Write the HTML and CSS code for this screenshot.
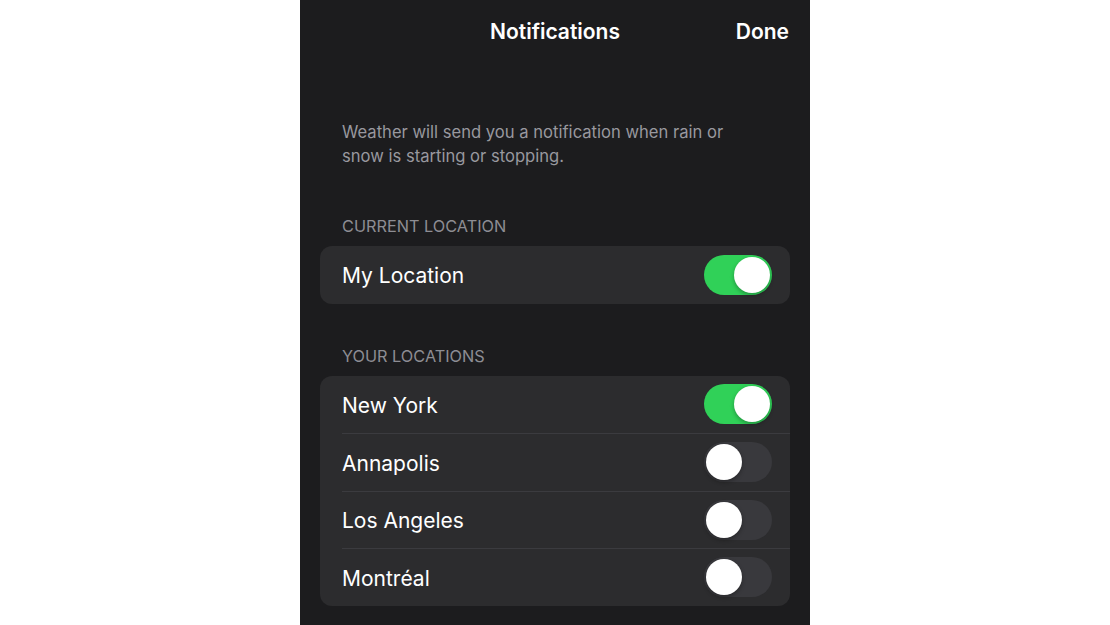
FILE: index.html
```html
<!DOCTYPE html>
<html lang="en">
<head>
  <meta charset="UTF-8" />
  <meta name="viewport" content="width=device-width, initial-scale=1.0"/>
  <title>Notifications</title>
  <link rel="stylesheet" href="styles.css">
</head>
<body>
  <div class="screen">
    <div class="nav">
      <span></span>
      <span class="nav-title">Notifications</span>
      <span class="nav-done">Done</span>
    </div>

    <p class="intro">Weather will send you a notification when rain or snow is starting or stopping.</p>

    <div class="group group-first">
      <div class="group-title">CURRENT LOCATION</div>
      <div class="card">
        <div class="row">
          <span class="label">My Location</span>
          <span class="switch on"><span class="knob"></span></span>
        </div>
      </div>
    </div>

    <div class="group">
      <div class="group-title">YOUR LOCATIONS</div>
      <div class="card">
        <div class="row">
          <span class="label">New York</span>
          <span class="switch on"><span class="knob"></span></span>
        </div>
        <div class="row">
          <span class="label">Annapolis</span>
          <span class="switch"><span class="knob"></span></span>
        </div>
        <div class="row">
          <span class="label">Los Angeles</span>
          <span class="switch"><span class="knob"></span></span>
        </div>
        <div class="row">
          <span class="label">Montréal</span>
          <span class="switch"><span class="knob"></span></span>
        </div>
      </div>
    </div>
  </div>
</body>
</html>
```

FILE: styles.css
```css
body {
  margin: 0;
  background: #ffffff;
  font-family: Inter, 'Noto Sans', sans-serif;
}
.screen {
  width: 510px;
  height: 625px;
  margin: 0 auto;
  background: #1c1c1e;
  color: #ffffff;
  overflow: hidden;
}
.nav {
  display: grid;
  grid-template-columns: 1fr auto 1fr;
  align-items: center;
  height: 62px;
  padding: 0 21px;
  font-size: 21px;
  font-weight: 600;
}
.nav-done {
  justify-self: end;
}
.intro {
  margin: 58px 0 0;
  padding: 0 50px 0 42px;
  font-size: 16.6px;
  line-height: 24px;
  color: #98989e;
}
.group {
  margin-top: 42px;
}
.group-first {
  margin-top: 48px;
}
.group-title {
  padding-left: 42px;
  font-size: 16.3px;
  line-height: 20px;
  color: #8d8d93;
  margin-bottom: 10px;
}
.card {
  margin: 0 20px;
  background: #2c2c2e;
  border-radius: 12px;
}
.row {
  display: flex;
  align-items: center;
  justify-content: space-between;
  height: 57.5px;
  margin-left: 22px;
  padding-right: 18px;
  box-sizing: border-box;
  border-top: 1px solid #3b3b3f;
}
.row:first-child {
  border-top: none;
}
.label {
  font-size: 21px;
  padding-top: 2px;
}
.switch {
  display: flex;
  align-items: center;
  width: 68px;
  height: 40px;
  padding: 2px;
  box-sizing: border-box;
  border-radius: 20px;
  background: #39393d;
}
.switch.on {
  background: #30d158;
  justify-content: flex-end;
}
.knob {
  width: 36px;
  height: 36px;
  border-radius: 50%;
  background: #ffffff;
  box-shadow: 0 2px 4px rgba(0, 0, 0, 0.3);
}
```
